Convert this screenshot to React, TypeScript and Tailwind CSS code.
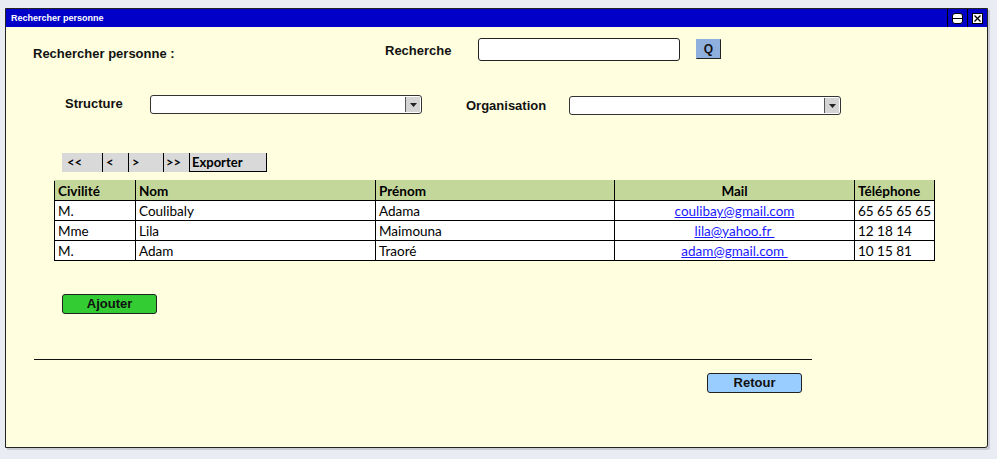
import React from "react";

const rows = [
  { civ: "M.", nom: "Coulibaly", prenom: "Adama", mail: "coulibay@gmail.com", tel: "65 65 65 65" },
  { civ: "Mme", nom: "Lila", prenom: "Maimouna", mail: "lila@yahoo.fr ", tel: "12 18 14" },
  { civ: "M.", nom: "Adam", prenom: "Traoré", mail: "adam@gmail.com ", tel: "10 15 81" },
];

const Select = () => (
  <div className="flex h-[19px] w-[272px] items-stretch rounded-[3px] border border-[#333] bg-white">
    <div className="flex-1" />
    <div className="my-px mr-px flex w-[15px] items-center justify-center border-l border-[#555] bg-[#d4d4d4]">
      <svg width="7" height="4" viewBox="0 0 7 4">
        <path d="M0 0h7L3.5 4z" fill="#222" />
      </svg>
    </div>
  </div>
);

const TitleButton = ({ kind }: { kind: "min" | "close" }) => (
  <div className="flex w-[20px] items-center justify-center border-l border-black">
    {kind === "min" ? (
      <div className="flex h-[11px] w-[11px] flex-col justify-center rounded-[3px] border border-black bg-white">
        <div className="h-px w-full bg-black" />
      </div>
    ) : (
      <div className="flex h-[11px] w-[11px] items-center justify-center border border-black bg-white">
        <svg width="7" height="7" viewBox="0 0 7 7">
          <path d="M0.5 0.5l6 6M6.5 0.5l-6 6" stroke="#000" strokeWidth="1.3" />
        </svg>
      </div>
    )}
  </div>
);

export default function App() {
  const cell = "border border-black px-[3px] h-[20px] leading-[18px] py-0";
  return (
    <div className="h-[459px] w-[997px] bg-[#e9ecf3] pl-[5px] pt-[8px] font-['Liberation_Sans',Arial,sans-serif]">
      <div className="flex h-[440px] w-[983px] flex-col rounded-br-[3px] border border-[#222] bg-[#ffffdf] shadow-[2px_2px_0_#c9ccd4]">
        {/* barre de titre */}
        <div className="flex h-[18px] items-stretch bg-[#0000c8]">
          <div className="flex-1 pl-[5px] text-[9px] leading-[18px] font-semibold text-white">
            Rechercher personne
          </div>
          <TitleButton kind="min" />
          <TitleButton kind="close" />
        </div>

        {/* recherche */}
        <div className="flex items-start pl-[27px] pt-[11px] text-[13px] font-bold text-[#111]">
          <div className="mt-[8px] w-[352px] leading-[16px]">Rechercher personne :</div>
          <div className="mt-[5px] w-[93px] leading-[16px]">Recherche</div>
          <div className="h-[23px] w-[202px] rounded-[3px] border border-[#222] bg-white" />
          <div className="ml-[16px] mt-px flex h-[20px] w-[25px] items-center justify-center border border-[#222] border-l-[#8fb0dd] border-t-[#8fb0dd] bg-[#8fb0dd] text-[12px]">
            Q
          </div>
        </div>

        <div className="mt-[33px] flex items-start pl-[59px] text-[13px] font-bold text-[#111]">
          <div className="mt-px w-[85px] leading-[16px]">Structure</div>
          <Select />
          <div className="ml-[44px] mt-[3px] w-[103px] leading-[16px]">Organisation</div>
          <div className="mt-px">
            <Select />
          </div>
        </div>

        {/* pagination */}
        <div className="ml-[56px] mt-[38px] flex h-[19px] w-[205px] bg-[#d9d9d9] font-['Lato',Calibri,sans-serif] text-[13px] font-bold leading-[19px] text-black">
          <div className="w-[41px] border-r border-black pl-[5px]">&lt;&lt;</div>
          <div className="w-[26px] border-r border-black pl-[3px]">&lt;</div>
          <div className="w-[35px] border-r border-black pl-[3px]">&gt;</div>
          <div className="w-[26px] border-r border-black pl-[2px]">&gt;&gt;</div>
          <div className="flex-1 border-r border-b border-black pl-[2px]">Exporter</div>
        </div>

        {/* tableau */}
        <table className="ml-[48px] mt-[8px] w-[881px] border-collapse font-['Lato',Calibri,sans-serif] text-[13.5px] text-black">
          <thead>
            <tr className="bg-[#c4d79b] font-bold">
              <td className={`${cell} w-[81px] border-t-[#c4d79b]`}>Civilité</td>
              <td className={`${cell} w-[240px] border-t-[#c4d79b]`}>Nom</td>
              <td className={`${cell} w-[239px] border-t-[#c4d79b]`}>Prénom</td>
              <td className={`${cell} w-[240px] border-t-[#c4d79b] text-center`}>Mail</td>
              <td className={`${cell} border-t-[#c4d79b]`}>Téléphone</td>
            </tr>
          </thead>
          <tbody className="bg-white">
            {rows.map((r) => (
              <tr key={r.mail}>
                <td className={cell}>{r.civ}</td>
                <td className={cell}>{r.nom}</td>
                <td className={cell}>{r.prenom}</td>
                <td className={`${cell} text-center`}>
                  <span className="whitespace-pre text-[#1a1aff] underline">{r.mail}</span>
                </td>
                <td className={cell}>{r.tel}</td>
              </tr>
            ))}
          </tbody>
        </table>

        <button className="ml-[56px] mt-[33px] h-[20px] w-[95px] rounded-[3px] border border-[#222] bg-[#33cc33] text-[13px] font-bold leading-[18px] text-[#111]">
          Ajouter
        </button>

        <div className="ml-[28px] mt-[45px] h-px w-[778px] bg-[#111]" />

        <button className="ml-[701px] mt-[13px] h-[20px] w-[95px] rounded-[3px] border border-[#222] bg-[#99ccff] text-[13px] font-bold leading-[18px] text-[#111]">
          Retour
        </button>
      </div>
    </div>
  );
}
